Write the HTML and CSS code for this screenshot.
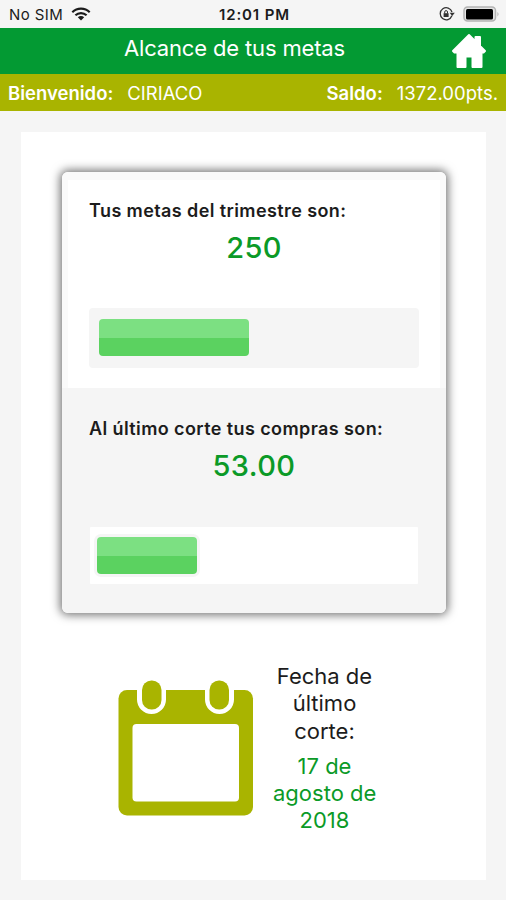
FILE: index.html
```html
<!DOCTYPE html>
<html lang="es">
<head>
<meta charset="UTF-8">
<meta name="viewport" content="width=device-width, initial-scale=1">
<title>Alcance de tus metas</title>
<link rel="stylesheet" href="styles.css">
</head>

<body>

<div class="status">
  <div class="status-left">
    <span class="carrier">No SIM</span>
    <svg class="wifi" width="20" height="14" viewBox="0 0 20 14" fill="none" stroke="#1c1c1c" stroke-width="2.2">
      <path d="M1.3 5.2C6.2.5 13.8.5 18.7 5.2"/>
      <path d="M4.4 8.3C7.6 5.3 12.4 5.3 15.6 8.3"/>
      <path d="M10 13.500L6.800 10.300C8.600 8.700 11.400 8.700 13.200 10.300Z" fill="#1c1c1c" stroke="none"/>
    </svg>
  </div>
  <span class="clock">12:01 PM</span>
  <div class="status-right">
    <svg width="16" height="14" viewBox="0 0 16 14" fill="none" stroke="#333" stroke-width="1.3">
      <path d="M12.900 8.800A6 6 0 1 1 13 5"/>
      <path d="M10.600 5.800H15.800L13.200 9Z" fill="#333" stroke="none"/>
      <rect x="4.600" y="6.200" width="5" height="3.800" fill="#333" stroke="none"/>
      <path d="M5.700 6.500V5A1.400 1.400 0 0 1 8.500 5V6.500" stroke-width="1"/>
    </svg>
    <svg width="37" height="16" viewBox="0 0 37 16">
      <rect x="1" y="1" width="31.500" height="14" rx="3.500" fill="#e4e4e4" stroke="#b4b4b4" stroke-width="1.500"/>
      <rect x="3" y="3" width="27" height="10.500" rx="1.500" fill="#000"/>
      <path d="M34.500 6V10.500Q36.500 8.200 34.500 6Z" fill="#aaa"/>
    </svg>
  </div>
</div>

<header class="header">
  <h1>Alcance de tus metas</h1>
  <a class="home" href="#" aria-label="Inicio">
    <svg width="36" height="36" viewBox="0 0 36 36" fill="#fff" stroke="#fff" stroke-width="2" stroke-linejoin="round">
      <path d="M18 2L24.500 8.500V4H29V13L34 18L32.500 19.500H30.500V34H21.500V23.500H14.500V34H6.500V19.500H3.500L2 18Z"/>
    </svg>
  </a>
</header>

<div class="user">
  <div><b>Bienvenido:</b><span class="name">CIRIACO</span></div>
  <div><b>Saldo:</b><span class="points">1372.00pts.</span></div>
</div>

<main class="page">
  <div class="panel">
    <section class="goal">
      <h2>Tus metas del trimestre son:</h2>
      <p class="amount">250</p>
      <div class="track"><div class="fill" style="width: 150px"></div></div>
    </section>
    <section class="goal purchases">
      <h2>Al último corte tus compras son:</h2>
      <p class="amount">53.00</p>
      <div class="track"><div class="fill" style="width: 100px"></div></div>
    </section>
  </div>

  <div class="cutoff">
    <svg class="calendar" width="136" height="136" viewBox="0 0 136 136">
      <rect x="0.500" y="10" width="134.500" height="125.500" rx="8.500" fill="#a9b400"/>
      <rect x="14.500" y="44" width="106.500" height="77.500" rx="4" fill="#fff"/>
      <path d="M19 9V19.500A14.500 14.500 0 0 0 48 19.500V9ZM87 9V19.500A14.500 14.500 0 0 0 116 19.500V9Z" fill="#fff"/>
      <rect x="24" y="0.500" width="19.500" height="29" rx="9.500" fill="#a9b400"/>
      <rect x="91.500" y="0.500" width="19.500" height="29" rx="9.500" fill="#a9b400"/>
    </svg>
    <div class="cutoff-text">
      <p>Fecha de<br>último<br>corte:</p>
      <p class="date">17 de<br>agosto de<br>2018</p>
    </div>
  </div>
</main>

</body>
</html>
```
FILE: styles.css
```css
* {
  box-sizing: border-box;
}
body {
  margin: 0;
  height: 900px;
  background-color: #f5f5f5;
  color: #1c1c1c;
  font-family: Inter, "Liberation Sans", Arial, sans-serif;
}
h1, h2, p {
  margin: 0;
}
.status {
  display: grid;
  grid-template-columns: 1fr auto 1fr;
  align-items: center;
  height: 28px;
  padding: 0 6px 0 9px;
  font-size: 15px;
}
.status-left {
  display: flex;
  align-items: center;
  gap: 8px;
}
.status-right {
  display: flex;
  align-items: center;
  justify-content: flex-end;
  gap: 8px;
}
.carrier {
  letter-spacing: .4px;
}
.clock {
  font-weight: 600;
  letter-spacing: .9px;
}
.header {
  display: grid;
  grid-template-columns: 18px 1fr 55px;
  height: 46px;
  background-color: #039a33;
  color: #fff;
}
.header h1 {
  grid-column: 2;
  font-size: 22px;
  font-weight: 400;
  line-height: 40px;
  letter-spacing: -.15px;
  text-align: center;
  white-space: nowrap;
}
.home {
  padding-top: 5px;
}
.user {
  display: flex;
  justify-content: space-between;
  height: 37px;
  padding: 0 8px;
  background-color: #a9b400;
  color: #fff;
  font-size: 18.5px;
  line-height: 39px;
}
.user b {
  font-weight: 600;
}
.name, .points {
  margin-left: 14px;
}
.page {
  height: 748px;
  margin: 21px 20px 0 21px;
  padding: 40px 40px 0 41px;
  background-color: #fff;
}
.panel {
  height: 441px;
  padding: 8px 6px 0;
  border-radius: 6px;
  background-image: linear-gradient(#fafafa 216px, #f5f5f5 216px);
  box-shadow: 0 0 10px 2px rgba(0,0,0,.55);
}
.goal {
  height: 208px;
  padding: 19px 21px 0;
  background-color: #fff;
}
.goal h2 {
  font-size: 18px;
  font-weight: 600;
  line-height: 24px;
  letter-spacing: .4px;
  white-space: nowrap;
}
.amount {
  margin-top: 7px;
  color: #0b9a27;
  font-size: 29px;
  font-weight: 500;
  line-height: 36px;
  letter-spacing: .4px;
  text-align: center;
}
.track {
  height: 60px;
  margin-top: 42px;
  padding: 11px 10px;
  border-radius: 4px;
  background-color: #f5f5f5;
}
.fill {
  height: 37px;
  border-radius: 4px;
  background-image: linear-gradient(#7ce082 52%, #5bd260 52%);
}
.purchases {
  padding-top: 29px;
  background-color: transparent;
}
.purchases .track {
  height: 57px;
  margin: 43px 1px 0;
  padding: 10px 7px;
  border-radius: 1px;
  background-color: #fff;
}
.purchases .fill {
  box-shadow: 0 0 0 3px #f5f5f5;
}
.cutoff {
  display: flex;
  gap: 19px;
  margin: 50px 0 0 56px;
}
.calendar {
  margin-top: 17px;
}
.cutoff-text {
  width: 103px;
  font-size: 22px;
  line-height: 27.3px;
  text-align: center;
}
.cutoff-text p {
  white-space: nowrap;
}
.cutoff-text .date {
  margin-top: 8px;
  color: #0b9a27;
}
```
